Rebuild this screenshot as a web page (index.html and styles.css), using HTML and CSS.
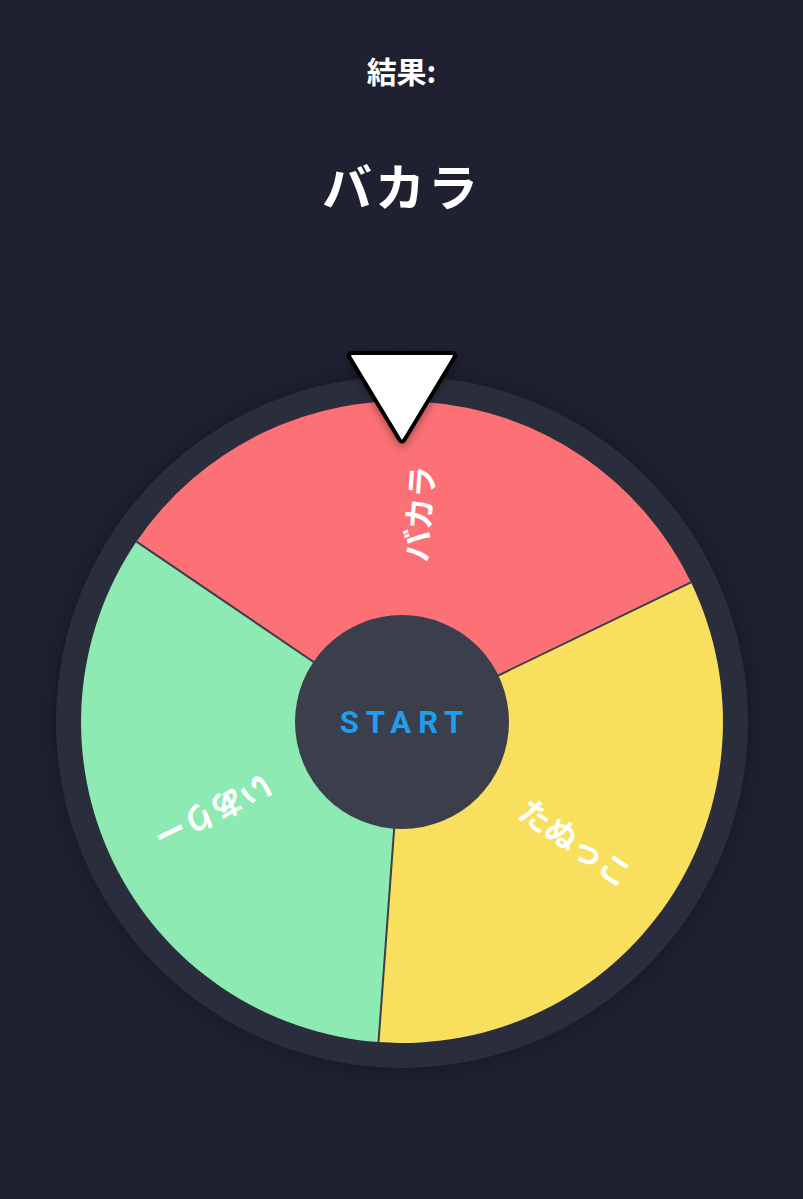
FILE: index.html
```html
<!DOCTYPE html>
<html lang="ja">
  <head>
    <meta charset="UTF-8" />
    <meta name="viewport" content="width=device-width, initial-scale=1.0" />
    <title>ルーレット</title>
    <link rel="stylesheet" href="styles.css">
  </head>
  <body>
    <div class="result">
      <h2 class="result-label">結果:</h2>
      <h1 class="result-value">バカラ</h1>
    </div>

    <div class="wheel-container">
      <svg class="pointer" viewBox="0 0 120 100">
        <path d="M11 6 L109 6 Q115 6 112 11 L63 92 Q60 97 57 92 L8 11 Q5 6 11 6 Z"
          fill="#fff" stroke="#000" stroke-width="4" stroke-linejoin="round" />
      </svg>

      <svg class="wheel" viewBox="-346 -346 692 692">
        <circle r="346" fill="#2a2d3c" />
        <path d="M0 0 L-265.5 -180.4 A321 321 0 0 1 289.0 -139.7 Z" fill="#fb7175" />
        <path d="M0 0 L289.0 -139.7 A321 321 0 0 1 -23.5 320.1 Z" fill="#f9df5e" />
        <path d="M0 0 L-23.5 320.1 A321 321 0 0 1 -265.5 -180.4 Z" fill="#8ceab2" />
        <g stroke="#3b3e4b" stroke-width="2">
          <line x1="0" y1="0" x2="-265.5" y2="-180.4" />
          <line x1="0" y1="0" x2="289.0" y2="-139.7" />
          <line x1="0" y1="0" x2="-23.5" y2="320.1" />
        </g>
        <g class="label">
          <text transform="rotate(-85.8)" x="209" y="0">バカラ</text>
          <text transform="rotate(34.2)" x="211" y="0">たぬっこ</text>
          <text transform="rotate(154.2)" x="209" y="0">いありー</text>
        </g>
      </svg>

      <button class="start-btn">START</button>
    </div>
  </body>
</html>
```

FILE: styles.css
```css
* {
  margin: 0;
  padding: 0;
  box-sizing: border-box;
}

body {
  background-color: #1f2130;
  font-family: "Noto Sans CJK JP", "Noto Sans", sans-serif;
  color: #fff;
  display: flex;
  flex-direction: column;
  align-items: center;
  height: 100vh;
}

.result {
  display: flex;
  flex-direction: column;
  align-items: center;
  padding-top: 48px;
}

.result-label {
  font-size: 30px;
  font-weight: 700;
  line-height: 44px;
}

.result-value {
  margin-top: 62px;
  font-size: 50px;
  font-weight: 700;
  letter-spacing: 3px;
  line-height: 60px;
}

.wheel-container {
  position: relative;
  width: 692px;
  height: 692px;
  margin-top: 162px;
  border-radius: 50%;
  box-shadow: 0 0 24px rgba(0, 0, 0, 0.35);
}

.wheel {
  display: block;
  width: 692px;
  height: 692px;
}

.label text {
  fill: #fff;
  font-size: 32px;
  font-weight: 700;
  text-anchor: middle;
  dominant-baseline: central;
  font-family: "Noto Sans CJK JP", sans-serif;
}

.pointer {
  position: absolute;
  top: -29px;
  left: 286px;
  width: 120px;
  height: 100px;
  z-index: 2;
  filter: drop-shadow(0 3px 4px rgba(0, 0, 0, 0.35));
}

.start-btn {
  position: absolute;
  top: 239px;
  left: 239px;
  width: 214px;
  height: 214px;
  border: none;
  border-radius: 50%;
  background-color: #3b3e4b;
  color: #209ded;
  font-family: Roboto, "Liberation Sans", sans-serif;
  font-size: 31px;
  font-weight: 700;
  letter-spacing: 7px;
  padding-left: 7px;
  cursor: pointer;
}
```
